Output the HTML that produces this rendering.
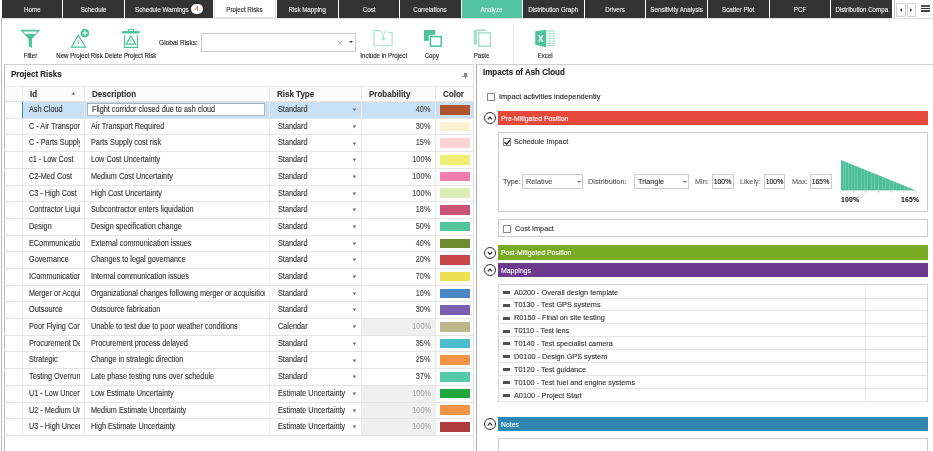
<!DOCTYPE html>
<html><head><meta charset="utf-8">
<style>
*{box-sizing:border-box;margin:0;padding:0}
html,body{width:933px;height:451px;overflow:hidden;background:#fff;font-family:"Liberation Sans",sans-serif;color:#333}
#root{-webkit-text-stroke:0.12px currentColor}
.a{position:absolute}
.tab{position:absolute;top:0;height:18px;background:#333;color:#f0f0f0;font-size:7px;line-height:19.4px;text-align:center;white-space:nowrap;overflow:hidden}
.t{display:inline-block;transform:scaleX(.886)}
.lbl{position:absolute;font-size:6.1px;color:#1a1a1a;white-space:nowrap;line-height:10px;text-align:center}
.row{position:absolute;left:4px;width:469px;height:16.7px;border-bottom:1px solid #e5e5e5;font-size:7.3px;color:#333}
.c{position:absolute;top:0;height:100%;line-height:15.2px;white-space:nowrap;overflow:hidden}
.s{display:inline-block;font-size:8.2px;transform:scaleX(.89);transform-origin:0 50%}
.sr{transform-origin:100% 50%}
.h{display:inline-block;font-size:9px;transform:scaleX(.889);transform-origin:0 50%}
.k{display:inline-block;transform:scaleX(0.8696)}
.vl{position:absolute;top:86px;width:1px;background:#eaeaea}
.sw{position:absolute;left:436px;top:2.9px;width:29.6px;height:9.6px}
.caret{position:absolute;width:0;height:0;border-left:2px solid transparent;border-right:2px solid transparent;border-top:2.4px solid #777}
.bar{position:absolute;left:498px;width:430px;color:#fff;font-size:6.9px;line-height:16.3px;padding-left:3px;white-space:nowrap}
.circ{position:absolute;left:484px;width:12px;height:12px;border:1px solid #333;border-radius:50%}
.chk{position:absolute;width:8px;height:8px;border:1px solid #8a8a8a;background:#fff}
.mrow{position:absolute;left:499px;width:428px;height:13px;border-bottom:1px solid #e4e4e4;font-size:7.3px;color:#333;line-height:13px;white-space:nowrap}
.mrow i{position:absolute;left:4.5px;top:5.4px;width:6.8px;height:2.5px;background:#505050}
.mrow span{position:absolute;left:15px;top:0;font-size:7.88px;transform:scaleX(0.9259);transform-origin:0 50%}
</style></head><body><div id="root" style="position:absolute;left:0;top:0;width:933px;height:451px;overflow:hidden;will-change:transform">

<!-- outer left border -->
<div class="a" style="left:2px;top:18px;width:931px;height:1px;background:#e2e2e2"></div>
<div class="a" style="left:1px;top:18px;width:1px;height:433px;background:#bbb"></div>

<!-- Tabs -->
<div class="tab" style="left:2px;width:60px"><span class="t">Home</span></div>
<div class="tab" style="left:63px;width:61px"><span class="t">Schedule</span></div>
<div class="tab" style="left:125px;width:87.5px"><span class="t" style="position:absolute;left:10px;top:0;transform-origin:0 50%">Schedule Warnings</span><span style="position:absolute;left:66px;top:4px;width:12px;height:10px;border-radius:5px;background:#fff;color:#e8572a;line-height:10px;text-align:center;font-size:6.8px">4</span></div>
<div class="tab" style="left:213.5px;width:62.5px;background:#fff;color:#222;border:1px solid #ddd;border-top:none"><span class="t">Project Risks</span></div>
<div class="tab" style="left:277px;width:60.5px"><span class="t">Risk Mapping</span></div>
<div class="tab" style="left:338.5px;width:60.5px"><span class="t">Cost</span></div>
<div class="tab" style="left:400px;width:60.5px"><span class="t">Correlations</span></div>
<div class="tab" style="left:461.5px;width:60.5px;background:#52c4a0"><span class="t">Analyze</span></div>
<div class="tab" style="left:523px;width:60.5px"><span class="t">Distribution Graph</span></div>
<div class="tab" style="left:584.5px;width:60.5px"><span class="t">Drivers</span></div>
<div class="tab" style="left:646px;width:61px"><span class="t">Sensitivity Analysis</span></div>
<div class="tab" style="left:708px;width:60.5px"><span class="t">Scatter Plot</span></div>
<div class="tab" style="left:769.5px;width:60.5px"><span class="t">PCF</span></div>
<div class="tab" style="left:831px;width:61px"><span class="t">Distribution Compa</span></div>
<div class="a" style="left:894px;top:0;width:1px;height:18px;background:#bbb"></div>
<div class="a" style="left:894px;top:18px;width:39px;height:1px;background:#ddd"></div>
<div class="a" style="left:896px;top:2.6px;width:9.6px;height:14px;border:1px solid #d0d0d0;border-radius:1px;background:#fff"></div>
<div class="a" style="left:899.5px;top:7.8px;width:0;height:0;border-top:2.1px solid transparent;border-bottom:2.1px solid transparent;border-right:2.6px solid #333"></div>
<div class="a" style="left:906.8px;top:2.6px;width:9.4px;height:14px;border:1px solid #d0d0d0;border-radius:1px;background:#fff"></div>
<div class="a" style="left:910px;top:7.8px;width:0;height:0;border-top:2.1px solid transparent;border-bottom:2.1px solid transparent;border-left:2.6px solid #333"></div>
<div class="a" style="left:921.3px;top:5.2px;width:8.6px;height:1.4px;background:#555"></div>
<div class="a" style="left:921.3px;top:7.8px;width:8.6px;height:1.2px;background:#333"></div>
<div class="a" style="left:921.3px;top:10.3px;width:8.6px;height:1.4px;background:#444"></div>

<!-- Toolbar -->
<svg class="a" style="left:0;top:18px" width="600" height="46" viewBox="0 18 600 46">
  <!-- filter -->
  <path d="M20 29.8 L40.4 29.8 L32 38.7 L31.9 47.9 L28.7 46.4 L28.6 38.7 Z" fill="#4cc39d"/>
  <path d="M23.3 31.5 L37.1 31.5 L35.3 34 L25.2 34 Z" fill="#fff"/>
  <!-- new risk -->
  <path d="M78.4 35.2 L85.6 47.1 L71.2 47.1 Z" fill="none" stroke="#4cc39d" stroke-width="1.2"/>
  <path d="M78.4 40.3 V44.2" stroke="#4cc39d" stroke-width="0.9"/>
  <circle cx="84.9" cy="33.1" r="5.3" fill="#fff"/>
  <circle cx="84.9" cy="33.1" r="4.3" fill="#4cc39d"/>
  <path d="M82.4 33.1 H87.4 M84.9 30.6 V35.6" stroke="#fff" stroke-width="1.2"/>
  <!-- trash -->
  <rect x="128.5" y="29.4" width="5" height="2" fill="none" stroke="#4cc39d" stroke-width="0.9"/>
  <rect x="121.9" y="31.1" width="17.7" height="2.4" fill="#4cc39d"/>
  <path d="M130.9 39.3 V41.6 M130.9 42.3 V43.1" stroke="#4cc39d" stroke-width="0.8"/>
  <path d="M124.5 34.9 V47.4 H137.5 V34.9" fill="none" stroke="#4cc39d" stroke-width="1.1"/>
  <path d="M130.9 36 L135.6 44.2 L126.2 44.2 Z" fill="none" stroke="#4cc39d" stroke-width="1.3"/>
  <!-- global risks input -->
  <!-- include -->
  <path d="M382.6 33.2 L379.6 30.6 H373.9 V45.8 H392.1 V32.7 H388.4" fill="none" stroke="#a3e0cb" stroke-width="1.1"/>
  <path d="M387.2 30 Q383 32 383.4 39" fill="none" stroke="#a3e0cb" stroke-width="1"/>
  <path d="M380.9 38 L386 38 L383.4 40.8 Z" fill="#a3e0cb"/>
  <!-- copy -->
  <rect x="424" y="30" width="11.3" height="10.9" fill="#4cc39d"/>
  <rect x="428.8" y="34.9" width="14.1" height="13" fill="#fff"/>
  <rect x="430.5" y="36.6" width="10.7" height="9.6" fill="none" stroke="#4cc39d" stroke-width="1.5"/>
  <!-- paste -->
  <rect x="473.7" y="30.2" width="4.2" height="14.5" fill="#a3e0cb"/>
  <rect x="476" y="29.4" width="10.3" height="1.8" fill="#a3e0cb"/>
  <rect x="477" y="31.2" width="15" height="16.6" fill="#fff"/>
  <rect x="478.7" y="32.9" width="11.7" height="13.3" fill="none" stroke="#a3e0cb" stroke-width="1.5"/>
  <!-- separator -->
  <rect x="513" y="25" width="1" height="35" fill="#e8e8e8"/>
  <!-- excel -->
  <rect x="545.5" y="31" width="8.5" height="14.7" fill="#fff" stroke="#8fd9bf" stroke-width="0.8"/>
  <path d="M546 33.5 H553.6 M546 36 H553.6 M546 38.5 H553.6 M546 41 H553.6 M546 43.5 H553.6 M549.8 31 V45.7" stroke="#8fd9bf" stroke-width="0.6"/>
  <path d="M535.2 31.3 L546 29.8 L546 47.2 L535.2 44.8 Z" fill="#4cc39d"/>
  <path d="M538.8 35.2 L542.7 41.8 M542.7 35.2 L538.8 41.8" stroke="#fff" stroke-width="1.3"/>
</svg>
<div class="lbl" style="left:15px;top:51px;width:31px"><span class="k" style="font-size:6.71px;transform:scaleX(0.9091);transform-origin:50% 50%">Filter</span></div>
<div class="lbl" style="left:50px;top:51px;width:60px"><span class="k" style="font-size:6.71px;transform:scaleX(0.9091);transform-origin:50% 50%">New Project Risk</span></div>
<div class="lbl" style="left:100px;top:51px;width:61px"><span class="k" style="font-size:6.71px;transform:scaleX(0.9091);transform-origin:50% 50%">Delete Project Risk</span></div>
<div class="lbl" style="left:159px;top:38px;font-size:6.6px"><span class="k" style="font-size:7.59px;transform-origin:0 50%">Global Risks:</span></div>
<div class="a" style="left:201px;top:33px;width:155px;height:19px;border:1px solid #ccc;background:#fff"></div>
<div class="a" style="left:337.4px;top:38.6px;font-size:8.5px;color:#bbb;line-height:8px">×</div>
<div class="a" style="left:348.6px;top:41px;width:0;height:0;border-left:2.2px solid transparent;border-right:2.2px solid transparent;border-top:2.6px solid #333"></div>
<div class="lbl" style="left:353px;top:51px;width:61px"><span class="k" style="font-size:6.71px;transform:scaleX(0.9091);transform-origin:50% 50%">Include in Project</span></div>
<div class="lbl" style="left:412px;top:51px;width:40px"><span class="k" style="font-size:6.71px;transform:scaleX(0.9091);transform-origin:50% 50%">Copy</span></div>
<div class="lbl" style="left:462px;top:51px;width:40px"><span class="k" style="font-size:6.71px;transform:scaleX(0.9091);transform-origin:50% 50%">Paste</span></div>
<div class="lbl" style="left:525px;top:51px;width:40px"><span class="k" style="font-size:6.71px;transform:scaleX(0.9091);transform-origin:50% 50%">Excel</span></div>

<!-- Left panel -->
<div class="a" style="left:4px;top:64px;width:470px;height:390px;border:1px solid #d0d0d0;border-color:#cfcfcf #ddd #cfcfcf #bdbdbd"></div>
<div class="a" style="left:11px;top:68.6px;font-size:8px;font-weight:bold;color:#222;line-height:10px"><span class="k" style="font-size:9.20px;transform-origin:0 50%">Project Risks</span></div>
<div class="a" style="left:464px;top:72.6px;width:3px;height:3.6px;background:#8a8a8a"></div>
<div class="a" style="left:462.2px;top:76px;width:6px;height:0.9px;background:#8a8a8a"></div>
<div class="a" style="left:465px;top:76.5px;width:0.8px;height:2.2px;background:#999"></div>
<!-- header -->
<div class="a" style="left:5px;top:86px;width:468px;height:16px;background:#fbfbfb;border-top:1px solid #eee;border-bottom:1px solid #e4e4e4"></div>
<div class="a" style="left:30px;top:88px;font-size:8px;font-weight:bold;color:#333;line-height:12px"><span class="h">Id</span></div>
<svg class="a" style="left:70px;top:91px" width="7" height="5" viewBox="0 0 7 5"><path d="M1.5 3.6 H5.3 L3.4 1.2 Z" fill="#555"/></svg>
<div class="a" style="left:92px;top:88px;font-size:8px;font-weight:bold;color:#333;line-height:12px"><span class="h">Description</span></div>
<div class="a" style="left:277px;top:88px;font-size:8px;font-weight:bold;color:#333;line-height:12px"><span class="h">Risk Type</span></div>
<div class="a" style="left:369px;top:88px;font-size:8px;font-weight:bold;color:#333;line-height:12px"><span class="h">Probability</span></div>
<div class="a" style="left:443px;top:88px;font-size:8px;font-weight:bold;color:#333;line-height:12px"><span class="h">Color</span></div>

<div class="row" style="top:102.10px">
<div class="a" style="left:18px;top:0;width:451px;height:100%;background:#c8e1f4"></div>
<div class="a" style="left:18px;top:0;width:1.2px;height:100%;background:#2f8ae0;z-index:3"></div>
<div class="c" style="left:25px;width:51px"><span class="s">Ash Cloud</span></div>
<div class="a" style="left:83.2px;top:1px;width:178.1px;height:13.4px;background:#fff;border:1px solid #aabdcc;border-top-color:#9fb2c2"></div>
<div class="c" style="left:87.8px;width:174px"><span class="s">Flight corridor closed due to ash cloud</span></div>
<div class="c" style="left:274px;width:80px"><span class="s">Standard</span></div>
<svg class="a" style="left:347.8px;top:6.1px" width="5" height="4" viewBox="0 0 5 4"><path d="M0.6 0.6 H4.2 L2.4 3.2 Z" fill="#6a6a6a"/></svg>
<div class="c" style="left:358px;width:68.5px;text-align:right;color:#444"><span class="s sr">40%</span></div>
<div class="sw" style="background:#b0542b"></div>
</div>
<div class="row" style="top:118.79px">
<div class="c" style="left:25px;width:51px"><span class="s">C - Air Transport</span></div>
<div class="c" style="left:87px;width:174px"><span class="s">Air Transport Required</span></div>
<div class="c" style="left:274px;width:80px"><span class="s">Standard</span></div>
<svg class="a" style="left:347.8px;top:6.1px" width="5" height="4" viewBox="0 0 5 4"><path d="M0.6 0.6 H4.2 L2.4 3.2 Z" fill="#6a6a6a"/></svg>
<div class="c" style="left:358px;width:68.5px;text-align:right;color:#444"><span class="s sr">30%</span></div>
<div class="sw" style="background:#fcf1d2"></div>
</div>
<div class="row" style="top:135.48px">
<div class="c" style="left:25px;width:51px"><span class="s">C - Parts Supply</span></div>
<div class="c" style="left:87px;width:174px"><span class="s">Parts Supply cost risk</span></div>
<div class="c" style="left:274px;width:80px"><span class="s">Standard</span></div>
<svg class="a" style="left:347.8px;top:6.1px" width="5" height="4" viewBox="0 0 5 4"><path d="M0.6 0.6 H4.2 L2.4 3.2 Z" fill="#6a6a6a"/></svg>
<div class="c" style="left:358px;width:68.5px;text-align:right;color:#444"><span class="s sr">15%</span></div>
<div class="sw" style="background:#fbd3d4"></div>
</div>
<div class="row" style="top:152.17px">
<div class="c" style="left:25px;width:51px"><span class="s">c1 - Low Cost</span></div>
<div class="c" style="left:87px;width:174px"><span class="s">Low Cost Uncertainty</span></div>
<div class="c" style="left:274px;width:80px"><span class="s">Standard</span></div>
<svg class="a" style="left:347.8px;top:6.1px" width="5" height="4" viewBox="0 0 5 4"><path d="M0.6 0.6 H4.2 L2.4 3.2 Z" fill="#6a6a6a"/></svg>
<div class="c" style="left:358px;width:68.5px;text-align:right;color:#444"><span class="s sr">100%</span></div>
<div class="sw" style="background:#eeec72"></div>
</div>
<div class="row" style="top:168.86px">
<div class="c" style="left:25px;width:51px"><span class="s">C2-Med Cost</span></div>
<div class="c" style="left:87px;width:174px"><span class="s">Medium Cost Uncertainty</span></div>
<div class="c" style="left:274px;width:80px"><span class="s">Standard</span></div>
<svg class="a" style="left:347.8px;top:6.1px" width="5" height="4" viewBox="0 0 5 4"><path d="M0.6 0.6 H4.2 L2.4 3.2 Z" fill="#6a6a6a"/></svg>
<div class="c" style="left:358px;width:68.5px;text-align:right;color:#444"><span class="s sr">100%</span></div>
<div class="sw" style="background:#f47cb0"></div>
</div>
<div class="row" style="top:185.55px">
<div class="c" style="left:25px;width:51px"><span class="s">C3 - High Cost</span></div>
<div class="c" style="left:87px;width:174px"><span class="s">High Cost Uncertainty</span></div>
<div class="c" style="left:274px;width:80px"><span class="s">Standard</span></div>
<svg class="a" style="left:347.8px;top:6.1px" width="5" height="4" viewBox="0 0 5 4"><path d="M0.6 0.6 H4.2 L2.4 3.2 Z" fill="#6a6a6a"/></svg>
<div class="c" style="left:358px;width:68.5px;text-align:right;color:#444"><span class="s sr">100%</span></div>
<div class="sw" style="background:#dcedb6"></div>
</div>
<div class="row" style="top:202.24px">
<div class="c" style="left:25px;width:51px"><span class="s">Contractor Liquidation</span></div>
<div class="c" style="left:87px;width:174px"><span class="s">Subcontractor enters liquidation</span></div>
<div class="c" style="left:274px;width:80px"><span class="s">Standard</span></div>
<svg class="a" style="left:347.8px;top:6.1px" width="5" height="4" viewBox="0 0 5 4"><path d="M0.6 0.6 H4.2 L2.4 3.2 Z" fill="#6a6a6a"/></svg>
<div class="c" style="left:358px;width:68.5px;text-align:right;color:#444"><span class="s sr">18%</span></div>
<div class="sw" style="background:#c95478"></div>
</div>
<div class="row" style="top:218.93px">
<div class="c" style="left:25px;width:51px"><span class="s">Design</span></div>
<div class="c" style="left:87px;width:174px"><span class="s">Design specification change</span></div>
<div class="c" style="left:274px;width:80px"><span class="s">Standard</span></div>
<svg class="a" style="left:347.8px;top:6.1px" width="5" height="4" viewBox="0 0 5 4"><path d="M0.6 0.6 H4.2 L2.4 3.2 Z" fill="#6a6a6a"/></svg>
<div class="c" style="left:358px;width:68.5px;text-align:right;color:#444"><span class="s sr">50%</span></div>
<div class="sw" style="background:#52c59d"></div>
</div>
<div class="row" style="top:235.62px">
<div class="c" style="left:25px;width:51px"><span class="s">ECommunication</span></div>
<div class="c" style="left:87px;width:174px"><span class="s">External communication issues</span></div>
<div class="c" style="left:274px;width:80px"><span class="s">Standard</span></div>
<svg class="a" style="left:347.8px;top:6.1px" width="5" height="4" viewBox="0 0 5 4"><path d="M0.6 0.6 H4.2 L2.4 3.2 Z" fill="#6a6a6a"/></svg>
<div class="c" style="left:358px;width:68.5px;text-align:right;color:#444"><span class="s sr">40%</span></div>
<div class="sw" style="background:#6d8b2f"></div>
</div>
<div class="row" style="top:252.31px">
<div class="c" style="left:25px;width:51px"><span class="s">Governance</span></div>
<div class="c" style="left:87px;width:174px"><span class="s">Changes to legal governance</span></div>
<div class="c" style="left:274px;width:80px"><span class="s">Standard</span></div>
<svg class="a" style="left:347.8px;top:6.1px" width="5" height="4" viewBox="0 0 5 4"><path d="M0.6 0.6 H4.2 L2.4 3.2 Z" fill="#6a6a6a"/></svg>
<div class="c" style="left:358px;width:68.5px;text-align:right;color:#444"><span class="s sr">20%</span></div>
<div class="sw" style="background:#c94646"></div>
</div>
<div class="row" style="top:269.00px">
<div class="c" style="left:25px;width:51px"><span class="s">ICommunication</span></div>
<div class="c" style="left:87px;width:174px"><span class="s">Internal communication issues</span></div>
<div class="c" style="left:274px;width:80px"><span class="s">Standard</span></div>
<svg class="a" style="left:347.8px;top:6.1px" width="5" height="4" viewBox="0 0 5 4"><path d="M0.6 0.6 H4.2 L2.4 3.2 Z" fill="#6a6a6a"/></svg>
<div class="c" style="left:358px;width:68.5px;text-align:right;color:#444"><span class="s sr">70%</span></div>
<div class="sw" style="background:#ebe153"></div>
</div>
<div class="row" style="top:285.69px">
<div class="c" style="left:25px;width:51px"><span class="s">Merger or Acquisition</span></div>
<div class="c" style="left:87px;width:174px"><span class="s">Organizational changes following merger or acquisition</span></div>
<div class="c" style="left:274px;width:80px"><span class="s">Standard</span></div>
<svg class="a" style="left:347.8px;top:6.1px" width="5" height="4" viewBox="0 0 5 4"><path d="M0.6 0.6 H4.2 L2.4 3.2 Z" fill="#6a6a6a"/></svg>
<div class="c" style="left:358px;width:68.5px;text-align:right;color:#444"><span class="s sr">10%</span></div>
<div class="sw" style="background:#4a87c6"></div>
</div>
<div class="row" style="top:302.38px">
<div class="c" style="left:25px;width:51px"><span class="s">Outsource</span></div>
<div class="c" style="left:87px;width:174px"><span class="s">Outsource fabrication</span></div>
<div class="c" style="left:274px;width:80px"><span class="s">Standard</span></div>
<svg class="a" style="left:347.8px;top:6.1px" width="5" height="4" viewBox="0 0 5 4"><path d="M0.6 0.6 H4.2 L2.4 3.2 Z" fill="#6a6a6a"/></svg>
<div class="c" style="left:358px;width:68.5px;text-align:right;color:#444"><span class="s sr">30%</span></div>
<div class="sw" style="background:#7b5db1"></div>
</div>
<div class="row" style="top:319.07px">
<div class="c" style="left:25px;width:51px"><span class="s">Poor Flying Conditions</span></div>
<div class="c" style="left:87px;width:174px"><span class="s">Unable to test due to poor weather conditions</span></div>
<div class="c" style="left:274px;width:80px"><span class="s">Calendar</span></div>
<svg class="a" style="left:347.8px;top:6.1px" width="5" height="4" viewBox="0 0 5 4"><path d="M0.6 0.6 H4.2 L2.4 3.2 Z" fill="#6a6a6a"/></svg>
<div class="a" style="left:358px;top:0;width:73px;height:100%;background:#efefef"></div>
<div class="c" style="left:358px;width:68.5px;text-align:right;color:#aaa"><span class="s sr">100%</span></div>
<div class="sw" style="background:#bdb68b"></div>
</div>
<div class="row" style="top:335.76px">
<div class="c" style="left:25px;width:51px"><span class="s">Procurement Delay</span></div>
<div class="c" style="left:87px;width:174px"><span class="s">Procurement process delayed</span></div>
<div class="c" style="left:274px;width:80px"><span class="s">Standard</span></div>
<svg class="a" style="left:347.8px;top:6.1px" width="5" height="4" viewBox="0 0 5 4"><path d="M0.6 0.6 H4.2 L2.4 3.2 Z" fill="#6a6a6a"/></svg>
<div class="c" style="left:358px;width:68.5px;text-align:right;color:#444"><span class="s sr">35%</span></div>
<div class="sw" style="background:#4bbdcd"></div>
</div>
<div class="row" style="top:352.45px">
<div class="c" style="left:25px;width:51px"><span class="s">Strategic</span></div>
<div class="c" style="left:87px;width:174px"><span class="s">Change in strategic direction</span></div>
<div class="c" style="left:274px;width:80px"><span class="s">Standard</span></div>
<svg class="a" style="left:347.8px;top:6.1px" width="5" height="4" viewBox="0 0 5 4"><path d="M0.6 0.6 H4.2 L2.4 3.2 Z" fill="#6a6a6a"/></svg>
<div class="c" style="left:358px;width:68.5px;text-align:right;color:#444"><span class="s sr">25%</span></div>
<div class="sw" style="background:#f59347"></div>
</div>
<div class="row" style="top:369.14px">
<div class="c" style="left:25px;width:51px"><span class="s">Testing Overrun</span></div>
<div class="c" style="left:87px;width:174px"><span class="s">Late phase testing runs over schedule</span></div>
<div class="c" style="left:274px;width:80px"><span class="s">Standard</span></div>
<svg class="a" style="left:347.8px;top:6.1px" width="5" height="4" viewBox="0 0 5 4"><path d="M0.6 0.6 H4.2 L2.4 3.2 Z" fill="#6a6a6a"/></svg>
<div class="c" style="left:358px;width:68.5px;text-align:right;color:#444"><span class="s sr">37%</span></div>
<div class="sw" style="background:#56c9a9"></div>
</div>
<div class="row" style="top:385.83px">
<div class="c" style="left:25px;width:51px"><span class="s">U1 - Low Uncertainty</span></div>
<div class="c" style="left:87px;width:174px"><span class="s">Low Estimate Uncertainty</span></div>
<div class="c" style="left:274px;width:80px"><span class="s">Estimate Uncertainty</span></div>
<svg class="a" style="left:347.8px;top:6.1px" width="5" height="4" viewBox="0 0 5 4"><path d="M0.6 0.6 H4.2 L2.4 3.2 Z" fill="#6a6a6a"/></svg>
<div class="a" style="left:358px;top:0;width:73px;height:100%;background:#efefef"></div>
<div class="c" style="left:358px;width:68.5px;text-align:right;color:#aaa"><span class="s sr">100%</span></div>
<div class="sw" style="background:#1ea83d"></div>
</div>
<div class="row" style="top:402.52px">
<div class="c" style="left:25px;width:51px"><span class="s">U2 - Medium Uncertainty</span></div>
<div class="c" style="left:87px;width:174px"><span class="s">Medium Estimate Uncertainty</span></div>
<div class="c" style="left:274px;width:80px"><span class="s">Estimate Uncertainty</span></div>
<svg class="a" style="left:347.8px;top:6.1px" width="5" height="4" viewBox="0 0 5 4"><path d="M0.6 0.6 H4.2 L2.4 3.2 Z" fill="#6a6a6a"/></svg>
<div class="a" style="left:358px;top:0;width:73px;height:100%;background:#efefef"></div>
<div class="c" style="left:358px;width:68.5px;text-align:right;color:#aaa"><span class="s sr">100%</span></div>
<div class="sw" style="background:#f59347"></div>
</div>
<div class="row" style="top:419.21px">
<div class="c" style="left:25px;width:51px"><span class="s">U3 - High Uncertainty</span></div>
<div class="c" style="left:87px;width:174px"><span class="s">High Estimate Uncertainty</span></div>
<div class="c" style="left:274px;width:80px"><span class="s">Estimate Uncertainty</span></div>
<svg class="a" style="left:347.8px;top:6.1px" width="5" height="4" viewBox="0 0 5 4"><path d="M0.6 0.6 H4.2 L2.4 3.2 Z" fill="#6a6a6a"/></svg>
<div class="a" style="left:358px;top:0;width:73px;height:100%;background:#efefef"></div>
<div class="c" style="left:358px;width:68.5px;text-align:right;color:#aaa"><span class="s sr">100%</span></div>
<div class="sw" style="background:#b03b3b"></div>
</div>
<div class="vl" style="left:22px;height:350px"></div>
<div class="vl" style="left:84px;height:350px"></div>
<div class="vl" style="left:269px;height:350px"></div>
<div class="vl" style="left:361px;height:350px"></div>
<div class="vl" style="left:435px;height:350px"></div>

<!-- Right panel -->
<div class="a" style="left:476px;top:64px;width:470px;height:390px;border-left:1px solid #aaa;border-top:1px solid #cfcfcf"></div>
<div class="a" style="left:483px;top:67px;font-size:8px;font-weight:bold;color:#222;line-height:10px"><span class="k" style="font-size:9.20px;transform-origin:0 50%">Impacts of Ash Cloud</span></div>
<div class="chk" style="left:487px;top:93px"></div>
<div class="a" style="left:499px;top:92px;font-size:7.45px;color:#222;line-height:9px"><span class="k" style="font-size:8.05px;transform:scaleX(0.9259);transform-origin:0 50%">Impact activities independently</span></div>

<div class="circ" style="left:484px;top:112px"><svg class="a" style="left:0;top:0" width="10" height="10" viewBox="0 0 10 10"><path d="M2.8 6.3 L5 4.1 L7.2 6.3" fill="none" stroke="#222" stroke-width="1.2"/></svg></div>
<div class="bar" style="top:110.8px;height:14.4px;background:#e5473b"><span class="k" style="font-size:7.93px;transform-origin:0 50%">Pre-Mitigated Position</span></div>
<div class="a" style="left:498px;top:132px;width:430px;height:80px;border:1px solid #ccc"></div>
<div class="chk" style="left:503px;top:137.9px"><svg class="a" style="left:0;top:0" width="8" height="8" viewBox="0 0 8 8"><path d="M0.4 3.2 L2.8 5.2 L6 1.2" fill="none" stroke="#111" stroke-width="1.3"/></svg></div>
<div class="a" style="left:514px;top:137px;font-size:7.3px;color:#333;line-height:9px"><span class="k" style="font-size:7.88px;transform:scaleX(0.9259);transform-origin:0 50%">Schedule Impact</span></div>
<div class="a" style="left:503px;top:177px;font-size:7.3px;color:#444;line-height:9px"><span class="k" style="font-size:7.88px;transform:scaleX(0.9259);transform-origin:0 50%">Type:</span></div>
<div class="a" style="left:521.5px;top:174px;width:61.5px;height:15px;border:1px solid #ccc"></div>
<div class="a" style="left:526px;top:177px;font-size:7.3px;color:#555;line-height:9px"><span class="k" style="font-size:7.88px;transform:scaleX(0.9259);transform-origin:0 50%">Relative</span></div>
<div class="a" style="left:576.5px;top:181px;width:0;height:0;border-left:2px solid transparent;border-right:2px solid transparent;border-top:2.2px solid #777"></div>
<div class="a" style="left:588px;top:177px;font-size:7.3px;color:#555;line-height:9px"><span class="k" style="font-size:7.88px;transform:scaleX(0.9259);transform-origin:0 50%">Distribution:</span></div>
<div class="a" style="left:633.5px;top:174px;width:55px;height:15px;border:1px solid #ccc"></div>
<div class="a" style="left:637.5px;top:177px;font-size:7.3px;color:#333;line-height:9px"><span class="k" style="font-size:7.88px;transform:scaleX(0.9259);transform-origin:0 50%">Triangle</span></div>
<div class="a" style="left:682.5px;top:181px;width:0;height:0;border-left:2px solid transparent;border-right:2px solid transparent;border-top:2.2px solid #777"></div>
<div class="a" style="left:694.5px;top:177px;font-size:7.3px;color:#666;line-height:9px"><span class="k" style="font-size:7.88px;transform:scaleX(0.9259);transform-origin:0 50%">Min:</span></div>
<div class="a" style="left:712px;top:174px;width:21.5px;height:15px;border:1px solid #ccc;font-size:6.9px;color:#111;line-height:13.4px;text-align:center"><span class="k" style="font-size:7.45px;transform:scaleX(0.9259);transform-origin:50% 50%">100%</span></div>
<div class="a" style="left:740px;top:177px;font-size:7.3px;color:#666;line-height:9px"><span class="k" style="font-size:7.88px;transform:scaleX(0.9259);transform-origin:0 50%">Likely:</span></div>
<div class="a" style="left:763.5px;top:174px;width:21.5px;height:15px;border:1px solid #ccc;font-size:6.9px;color:#111;line-height:13.4px;text-align:center"><span class="k" style="font-size:7.45px;transform:scaleX(0.9259);transform-origin:50% 50%">100%</span></div>
<div class="a" style="left:791.5px;top:177px;font-size:7.3px;color:#666;line-height:9px"><span class="k" style="font-size:7.88px;transform:scaleX(0.9259);transform-origin:0 50%">Max:</span></div>
<div class="a" style="left:810px;top:174px;width:22px;height:15px;border:1px solid #ccc;font-size:6.9px;color:#111;line-height:13.4px;text-align:center"><span class="k" style="font-size:7.45px;transform:scaleX(0.9259);transform-origin:50% 50%">165%</span></div>
<svg class="a" style="left:838px;top:158px" width="85" height="38" viewBox="838 158 85 38"><path d="M841 160 L916.2 190.6 L841 190.6 Z" fill="#4cbf98"/>
<rect x="843.20" y="160.90" width="0.45" height="29.70" fill="#8fdcc0"/>
<rect x="845.10" y="161.67" width="0.45" height="28.93" fill="#8fdcc0"/>
<rect x="848.30" y="162.97" width="0.45" height="27.63" fill="#8fdcc0"/>
<rect x="851.00" y="164.07" width="0.45" height="26.53" fill="#8fdcc0"/>
<rect x="854.60" y="165.53" width="0.45" height="25.07" fill="#8fdcc0"/>
<rect x="857.20" y="166.59" width="0.45" height="24.01" fill="#8fdcc0"/>
<rect x="861.40" y="168.30" width="0.45" height="22.30" fill="#8fdcc0"/>
<rect x="864.00" y="169.36" width="0.45" height="21.24" fill="#8fdcc0"/>
<rect x="867.50" y="170.78" width="0.45" height="19.82" fill="#8fdcc0"/>
<rect x="871.20" y="172.29" width="0.45" height="18.31" fill="#8fdcc0"/>
<rect x="874.40" y="173.59" width="0.45" height="17.01" fill="#8fdcc0"/>
<rect x="878.60" y="175.30" width="0.45" height="15.30" fill="#8fdcc0"/>
<rect x="882.00" y="176.68" width="0.45" height="13.92" fill="#8fdcc0"/>
<rect x="885.30" y="178.03" width="0.45" height="12.57" fill="#8fdcc0"/>
<rect x="889.70" y="179.82" width="0.45" height="10.78" fill="#8fdcc0"/>
<rect x="893.10" y="181.20" width="0.45" height="9.40" fill="#8fdcc0"/>
<rect x="896.40" y="182.54" width="0.45" height="8.06" fill="#8fdcc0"/>
<rect x="900.50" y="184.21" width="0.45" height="6.39" fill="#8fdcc0"/>
<rect x="904.00" y="185.64" width="0.45" height="4.96" fill="#8fdcc0"/>
<rect x="907.60" y="187.10" width="0.45" height="3.50" fill="#8fdcc0"/>
<rect x="911.20" y="188.57" width="0.45" height="2.03" fill="#8fdcc0"/>
<path d="M841 190.9 H916.2" stroke="#e3e3e3" stroke-width="0.6"/>
<path d="M841.00 190.6 V193.2" stroke="#c8c8c8" stroke-width="0.7"/>
<path d="M853.53 190.6 V193.2" stroke="#c8c8c8" stroke-width="0.7"/>
<path d="M866.07 190.6 V193.2" stroke="#c8c8c8" stroke-width="0.7"/>
<path d="M878.60 190.6 V193.2" stroke="#c8c8c8" stroke-width="0.7"/>
<path d="M891.13 190.6 V193.2" stroke="#c8c8c8" stroke-width="0.7"/>
<path d="M903.67 190.6 V193.2" stroke="#c8c8c8" stroke-width="0.7"/>
<path d="M916.20 190.6 V193.2" stroke="#c8c8c8" stroke-width="0.7"/></svg>
<div class="a" style="left:840.6px;top:195.2px;font-size:6.8px;font-weight:bold;color:#222;line-height:9px;letter-spacing:0.25px"><span class="k" style="font-size:7.4px;transform:scaleX(.92);transform-origin:0 50%">100%</span></div>
<div class="a" style="left:901.3px;top:195.2px;font-size:6.8px;font-weight:bold;color:#222;line-height:9px;letter-spacing:0.25px"><span class="k" style="font-size:7.4px;transform:scaleX(.92);transform-origin:0 50%">165%</span></div>

<div class="a" style="left:498px;top:219px;width:430px;height:18px;border:1px solid #ccc"></div>
<div class="chk" style="left:503px;top:224.5px"></div>
<div class="a" style="left:514.5px;top:224px;font-size:7.3px;color:#333;line-height:9px"><span class="k" style="font-size:7.88px;transform:scaleX(0.9259);transform-origin:0 50%">Cost Impact</span></div>

<div class="circ" style="left:484px;top:247px"><svg class="a" style="left:0;top:0" width="10" height="10" viewBox="0 0 10 10"><path d="M2.8 4.0 L5 6.2 L7.2 4.0" fill="none" stroke="#222" stroke-width="1.2"/></svg></div>
<div class="bar" style="top:245.4px;height:15px;background:#78ab22"><span class="k" style="font-size:7.93px;transform-origin:0 50%">Post-Mitigated Position</span></div>
<div class="circ" style="left:484px;top:264px"><svg class="a" style="left:0;top:0" width="10" height="10" viewBox="0 0 10 10"><path d="M2.8 6.3 L5 4.1 L7.2 6.3" fill="none" stroke="#222" stroke-width="1.2"/></svg></div>
<div class="bar" style="top:263.4px;height:13.6px;background:#6b3a8c"><span class="k" style="font-size:7.93px;transform-origin:0 50%">Mappings</span></div>

<div class="a" style="left:498px;top:284px;width:430px;height:118px;border:1px solid #d4d4d4"></div>
<div class="a" style="left:865px;top:285px;width:1px;height:116px;background:#e8e8e8"></div>
<div class="mrow" style="top:285.50px"><span>A0200 - Overall design template</span></div>
<div class="a" style="left:503px;top:291px;width:7px;height:2.5px;background:#505050"></div>
<div class="mrow" style="top:298.45px"><span>T0130 - Test GPS systems</span></div>
<div class="a" style="left:503px;top:304px;width:7px;height:2.5px;background:#505050"></div>
<div class="mrow" style="top:311.40px"><span>R0150 - Final on site testing</span></div>
<div class="a" style="left:503px;top:317px;width:7px;height:2.5px;background:#505050"></div>
<div class="mrow" style="top:324.35px"><span>T0110 - Test lens</span></div>
<div class="a" style="left:503px;top:330px;width:7px;height:2.5px;background:#505050"></div>
<div class="mrow" style="top:337.30px"><span>T0140 - Test specialist camera</span></div>
<div class="a" style="left:503px;top:342px;width:7px;height:2.5px;background:#505050"></div>
<div class="mrow" style="top:350.25px"><span>D0100 - Design GPS system</span></div>
<div class="a" style="left:503px;top:355px;width:7px;height:2.5px;background:#505050"></div>
<div class="mrow" style="top:363.20px"><span>T0120 - Test guidance</span></div>
<div class="a" style="left:503px;top:368px;width:7px;height:2.5px;background:#505050"></div>
<div class="mrow" style="top:376.15px"><span>T0100 - Test fuel and engine systems</span></div>
<div class="a" style="left:503px;top:381px;width:7px;height:2.5px;background:#505050"></div>
<div class="mrow" style="top:389.10px"><span>A0100 - Project Start</span></div>
<div class="a" style="left:503px;top:394px;width:7px;height:2.5px;background:#505050"></div>

<div class="circ" style="left:484px;top:418px"><svg class="a" style="left:0;top:0" width="10" height="10" viewBox="0 0 10 10"><path d="M2.8 6.3 L5 4.1 L7.2 6.3" fill="none" stroke="#222" stroke-width="1.2"/></svg></div>
<div class="bar" style="top:417px;height:14px;background:#2e86b1"><span class="k" style="font-size:7.93px;transform-origin:0 50%">Notes</span></div>
<div class="a" style="left:498px;top:438px;width:430px;height:30px;border:1px solid #ccc"></div>

</div></body></html>
